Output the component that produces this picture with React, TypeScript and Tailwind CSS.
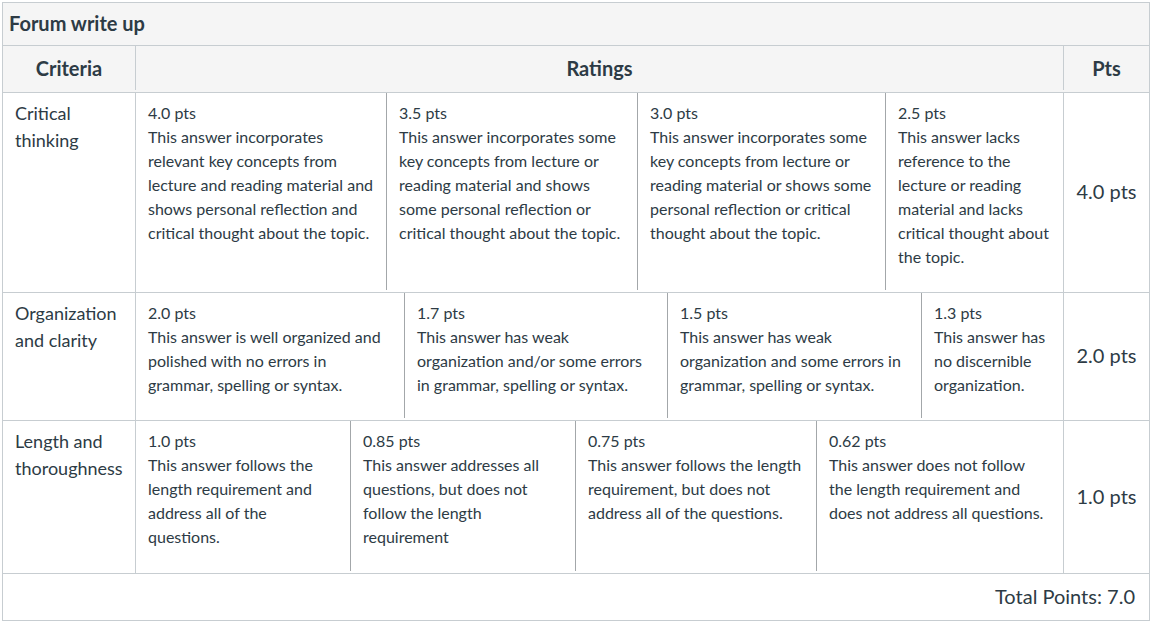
import React from "react";

type Rating = { pts: string; lines: string[]; w?: string };
type Criterion = { name: string[]; pts: string; h: string; ratings: Rating[] };

const rubric: Criterion[] = [
  {
    name: ["Critical", "thinking"],
    pts: "4.0 pts",
    h: "h-[200px]",
    ratings: [
      {
        pts: "4.0 pts",
        w: "w-[251px]",
        lines: [
          "This answer incorporates",
          "relevant key concepts from",
          "lecture and reading material and",
          "shows personal reflection and",
          "critical thought about the topic.",
        ],
      },
      {
        pts: "3.5 pts",
        w: "w-[251px]",
        lines: [
          "This answer incorporates some",
          "key concepts from lecture or",
          "reading material and shows",
          "some personal reflection or",
          "critical thought about the topic.",
        ],
      },
      {
        pts: "3.0 pts",
        w: "w-[248px]",
        lines: [
          "This answer incorporates some",
          "key concepts from lecture or",
          "reading material or shows some",
          "personal reflection or critical",
          "thought about the topic.",
        ],
      },
      {
        pts: "2.5 pts",
        lines: [
          "This answer lacks",
          "reference to the",
          "lecture or reading",
          "material and lacks",
          "critical thought about",
          "the topic.",
        ],
      },
    ],
  },
  {
    name: ["Organization", "and clarity"],
    pts: "2.0 pts",
    h: "h-[128px]",
    ratings: [
      {
        pts: "2.0 pts",
        w: "w-[269px]",
        lines: [
          "This answer is well organized and",
          "polished with no errors in",
          "grammar, spelling or syntax.",
        ],
      },
      {
        pts: "1.7 pts",
        w: "w-[263px]",
        lines: [
          "This answer has weak",
          "organization and/or some errors",
          "in grammar, spelling or syntax.",
        ],
      },
      {
        pts: "1.5 pts",
        w: "w-[254px]",
        lines: [
          "This answer has weak",
          "organization and some errors in",
          "grammar, spelling or syntax.",
        ],
      },
      {
        pts: "1.3 pts",
        lines: ["This answer has", "no discernible", "organization."],
      },
    ],
  },
  {
    name: ["Length and", "thoroughness"],
    pts: "1.0 pts",
    h: "h-[153px]",
    ratings: [
      {
        pts: "1.0 pts",
        w: "w-[215px]",
        lines: [
          "This answer follows the",
          "length requirement and",
          "address all of the",
          "questions.",
        ],
      },
      {
        pts: "0.85 pts",
        w: "w-[225px]",
        lines: [
          "This answer addresses all",
          "questions, but does not",
          "follow the length",
          "requirement",
        ],
      },
      {
        pts: "0.75 pts",
        w: "w-[241px]",
        lines: [
          "This answer follows the length",
          "requirement, but does not",
          "address all of the questions.",
        ],
      },
      {
        pts: "0.62 pts",
        lines: [
          "This answer does not follow",
          "the length requirement and",
          "does not address all questions.",
        ],
      },
    ],
  },
];

const RatingCell = ({ rating, last }: { rating: Rating; last: boolean }) => (
  <div
    className={`${last ? "flex-1" : `${rating.w} shrink-0 border-r border-[#a3a7aa]`} mb-0.5 px-3 pt-2 text-[16px] leading-6`}
  >
    <div className="whitespace-nowrap">{rating.pts}</div>
    {rating.lines.map((l) => (
      <div key={l} className="whitespace-nowrap">
        {l}
      </div>
    ))}
  </div>
);

export default function App() {
  return (
    <div
      className="m-0.5 w-[1148px] border border-[#c7cdd1] bg-white text-[#2d3b45]"
      style={{ fontFamily: "Lato, 'Open Sans', sans-serif" }}
    >
      <div className="flex h-[43px] items-center border-b border-[#c7cdd1] bg-[#f5f5f5] pb-0.5 pl-1.5 text-[20px] font-bold">
        Forum write up
      </div>

      <div className="flex h-[47px] border-b border-[#c7cdd1] bg-[#f5f5f5] pb-0.5 text-[20px] font-bold">
        <div className="flex w-[133px] shrink-0 items-center justify-center border-r border-[#c7cdd1]">
          Criteria
        </div>
        <div className="flex w-[928px] shrink-0 items-center justify-center border-r border-[#c7cdd1]">
          Ratings
        </div>
        <div className="flex flex-1 items-center justify-center">Pts</div>
      </div>

      {rubric.map((c) => (
        <div key={c.pts} className={`flex ${c.h} border-b border-[#c7cdd1]`}>
          <div className="w-[133px] shrink-0 border-r border-[#c7cdd1] px-3 pt-[7px] text-[18px] leading-[27px]">
            {c.name.map((n) => (
              <div key={n}>{n}</div>
            ))}
          </div>
          <div className="flex w-[928px] shrink-0 border-r border-[#c7cdd1]">
            {c.ratings.map((r, i) => (
              <RatingCell key={r.pts} rating={r} last={i === c.ratings.length - 1} />
            ))}
          </div>
          <div className="flex flex-1 items-center justify-center pb-[3px] text-[20px]">
            {c.pts}
          </div>
        </div>
      ))}

      <div className="flex h-[46px] items-center justify-end pr-3.5 pb-0.5 pl-3 text-[20px]">
        Total Points: 7.0
      </div>
    </div>
  );
}
